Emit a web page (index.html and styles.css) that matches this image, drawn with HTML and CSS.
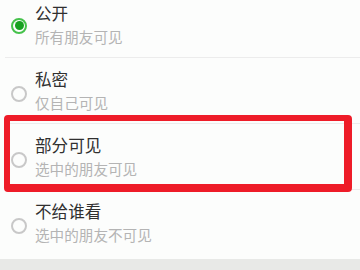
FILE: index.html
```html
<!DOCTYPE html>
<html lang="zh">
<head>
<meta charset="utf-8">
<link rel="stylesheet" href="styles.css">
</head>
<body>
<div class="page">
  <ul class="list">
    <li class="item">
      <span class="radio checked"><span class="dot"></span></span>
      <div class="text">
        <div class="title">公开</div>
        <div class="sub">所有朋友可见</div>
      </div>
    </li>
    <li class="item">
      <span class="radio"></span>
      <div class="text">
        <div class="title">私密</div>
        <div class="sub">仅自己可见</div>
      </div>
    </li>
    <li class="item">
      <span class="radio"></span>
      <div class="text">
        <div class="title">部分可见</div>
        <div class="sub">选中的朋友可见</div>
      </div>
    </li>
    <li class="item last">
      <span class="radio"></span>
      <div class="text">
        <div class="title">不给谁看</div>
        <div class="sub">选中的朋友不可见</div>
      </div>
    </li>
  </ul>
  <div class="footer"></div>
  <div class="highlight"></div>
</div>
</body>
</html>
```

FILE: styles.css
```css
html, body {
  margin: 0;
  padding: 0;
}
body {
  width: 360px;
  height: 270px;
  overflow: hidden;
  background: #fcfdfc;
  font-family: "Noto Sans CJK SC", "Noto Sans", sans-serif;
}
.page {
  position: relative;
  height: 270px;
  overflow: hidden;
}
.list {
  list-style: none;
  margin: -8px 0 0 0;
  padding: 0;
}
.item {
  display: flex;
  align-items: center;
  height: 65px;
  border-bottom: 1px solid #ececec;
  margin-left: 5px;
  padding-left: 6px;
}
.item.last {
  border-bottom: none;
  height: 66px;
}
.radio {
  width: 12px;
  height: 12px;
  border: 2px solid #c8c8c8;
  border-radius: 50%;
  flex: none;
  margin-top: 6px;
  display: flex;
  align-items: center;
  justify-content: center;
  box-sizing: content-box;
}
.radio.checked {
  border: 2px solid #45c24b;
  margin-top: 2px;
}
.dot {
  width: 9px;
  height: 9px;
  border-radius: 50%;
  background: #16a11f;
}
.text {
  margin-left: 8px;
  display: flex;
  flex-direction: column;
  gap: 4px;
}
.title {
  font-size: 16.6px;
  line-height: 20px;
  color: #303030;
}
.sub {
  font-size: 14.6px;
  line-height: 20px;
  color: #b4b4b4;
}
.footer {
  margin-top: 3px;
  height: 20px;
  background: #e8e9e7;
}
.highlight {
  position: absolute;
  left: 4px;
  top: 115px;
  width: 348px;
  height: 77px;
  box-sizing: border-box;
  border-style: solid;
  border-color: #ee1c28;
  border-width: 6px 8px 8px 6px;
  border-radius: 4px;
}
```
